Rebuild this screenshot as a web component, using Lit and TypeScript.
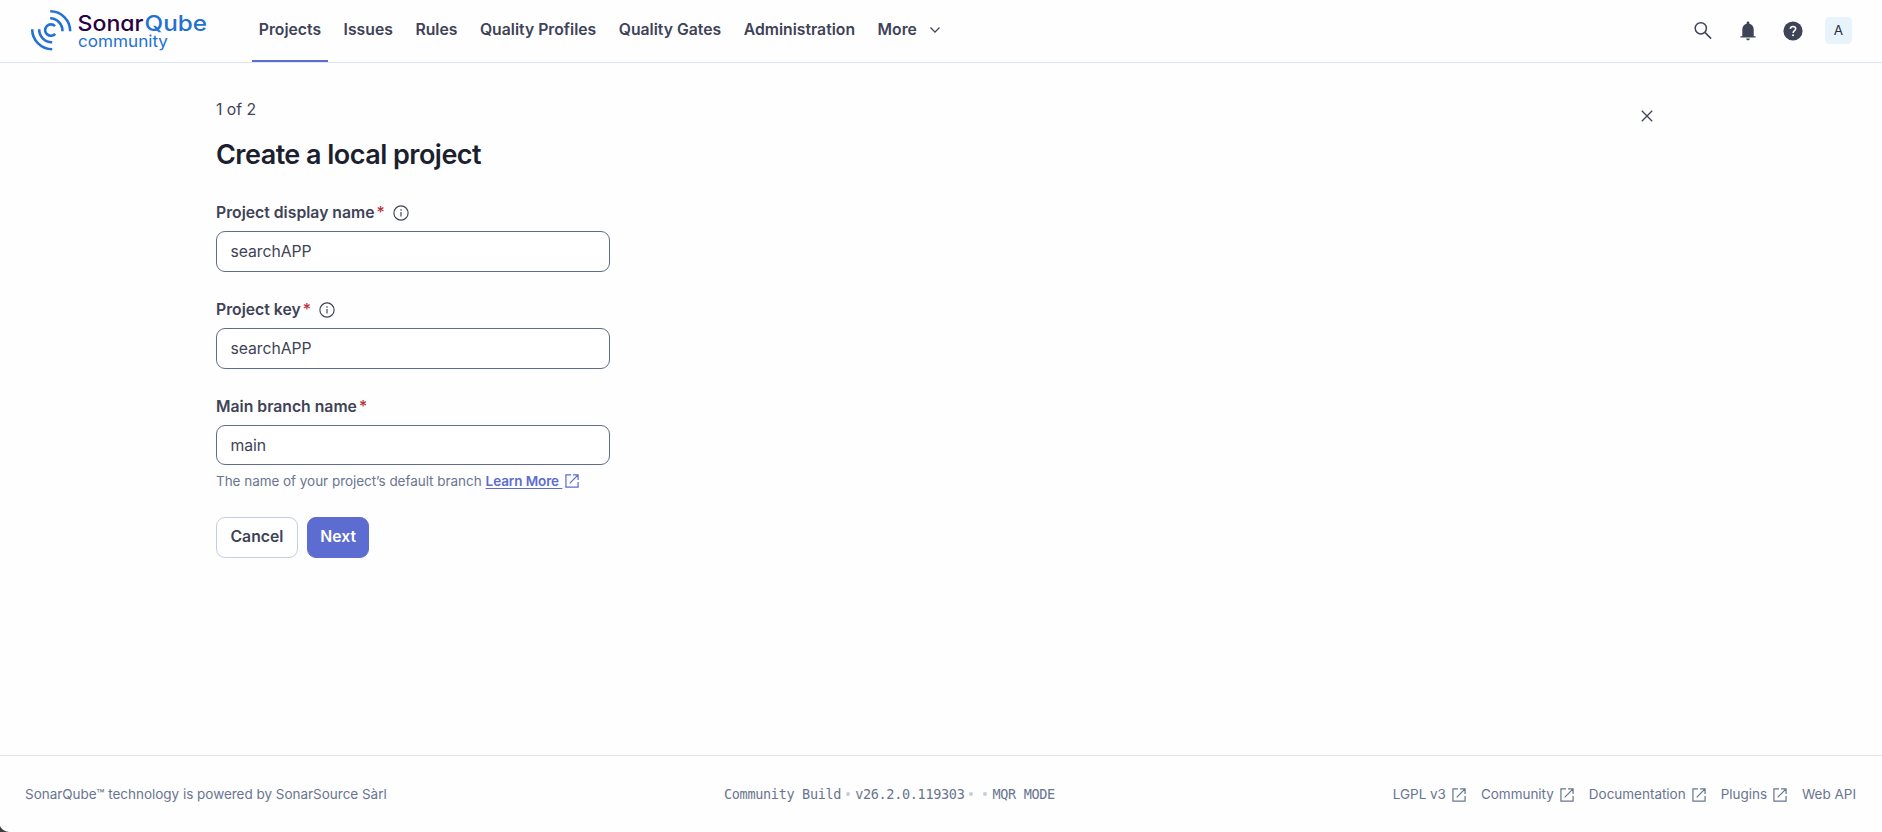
import { LitElement, html, css } from "lit";
import { customElement } from "lit/decorators.js";

const external = html`<svg class="ext" viewBox="0 0 15 15" fill="none" stroke="currentColor" stroke-width="1.3">
  <path d="M6.5 1H1v13h13V8.5M8.6 1H14v5.4M14 1 5 10" />
</svg>`;

const info = html`<svg class="info" viewBox="0 0 16 16" fill="none" stroke="currentColor" stroke-width="1.15">
  <circle cx="8" cy="8" r="7.1" /><path d="M8 7v4.4" /><circle cx="8" cy="5" r=".8" fill="currentColor" stroke="none" />
</svg>`;

@customElement("app-root")
export class AppRoot extends LitElement {
  static styles = css`
    :host { display: flex; flex-direction: column; height: 832px; overflow: hidden; position: relative;
      background: #fefefe; color: #3e4357; font: 400 15.75px/22.5px Inter, sans-serif; box-sizing: border-box; }
    * { box-sizing: border-box; }
    svg { display: block; flex: none; }
    header { display: flex; height: 63px; border-bottom: 1px solid #dde5f0; padding-left: 28px; padding-right: 30px; flex: none; }
    .logo { width: 182px; height: 56px; margin-right: 42px; }
    .sonar { font: 500 21.5px Inter, sans-serif; font-feature-settings: "cv11"; }
    .edition { font: 400 16.5px Inter, sans-serif; }
    nav { display: flex; gap: 9px; height: 62px; }
    .item { padding: 19px 6.75px 0; font-weight: 600; border-bottom: 2px solid transparent; display: flex; }
    .item.active { border-color: #5d6cd0; }
    .chev { width: 12px; height: 8px; margin: 7px 0 0 12px; }
    .tools { margin-left: auto; display: flex; height: 61px; align-items: center; gap: 27px; }
    .tools svg { width: 18px; height: 20px; }
    .tools .help { width: 20px; margin-left: -1px; margin-right: -5px; }
    .avatar { width: 27px; height: 27px; border-radius: 4.5px; background: #e9f3fb; font-size: 13.5px; line-height: 27px; text-align: center; color: #2a2f40; }
    main { flex: 1; padding: 36px 229px 0 216px; display: flex; justify-content: space-between; align-items: flex-start; }
    .step { height: 23px; line-height: 22px; }
    h1 { margin: 15px 0 0; font: 600 27px/36px Inter, sans-serif; letter-spacing: -.53px; color: #1b1f2e; }
    .field { margin-top: 27px; }
    h1 + .field { margin-top: 29px; }
    .label { display: flex; height: 22px; line-height: 22px; align-items: center; font-weight: 600; margin-bottom: 7px; }
    .req { color: #b93235; margin-left: 2px; font-weight: 500; }
    .info { width: 16px; height: 16px; margin-left: 8px; }
    .box { width: 394px; height: 41px; border: 1px solid #626c8a; border-radius: 9px; padding: 0 13.5px; line-height: 39px; letter-spacing: -.05px; background: #fff; }
    .box.short { height: 40px; }
    .hint { margin-top: 5px; display: flex; font-size: 13.5px; line-height: 22px; color: #6a7590; align-items: center; letter-spacing: -.04px; }
    .hint a { color: #5d6cd0; font-weight: 600; text-decoration: underline; margin: 0 3px 0 4px; white-space: pre; text-underline-offset: 2px; letter-spacing: -.1px; }
    .hint .ext { color: #5d6cd0; }
    .ext { width: 14px; height: 14px; }
    .actions { display: flex; gap: 9px; margin-top: 25px; }
    .btn { height: 41px; border-radius: 9px; line-height: 38px; font-weight: 600; padding: 0 13.5px; border: 1px solid #c5cde0; background: #fff; }
    .btn.primary { background: #5d6cd0; border-color: #5d6cd0; color: #fff; padding: 0 12.4px; }
    .close { width: 12px; height: 12px; margin-top: 11px; }
    footer { height: 77px; flex: none; border-top: 1px solid #e3e5e8; padding: 1px 26px 0 25px; display: grid; grid-template-columns: 699px 1fr auto; align-items: center; font-size: 13.5px; color: #69758f; letter-spacing: -.02px; }
    .build { display: flex; align-items: center; font: 400 13.5px/20px "DejaVu Sans Mono", monospace; letter-spacing: -.32px; padding-bottom: 2px; }
    .dot { width: 4px; height: 4px; border-radius: 50%; background: #c5cde0; margin: 0 5px; }
    .links { display: flex; gap: 15px; }
    .link { display: flex; align-items: center; gap: 6px; }
    .corner { position: absolute; left: 0; bottom: 0; width: 9px; height: 6px; }
  `;

  field(label: string, value: string, tip: boolean) {
    return html`<section class="field">
      <div class="label"><span>${label}</span><span class="req">*</span>${tip ? info : ""}</div>
      <div class="box ${tip ? "" : "short"}">${value}</div>
    </section>`;
  }

  render() {
    const nav = ["Projects", "Issues", "Rules", "Quality Profiles", "Quality Gates", "Administration"];
    return html`
      <header>
        <svg class="logo" viewBox="28 0 182 56">
          <g fill="none" stroke="#2271d3" stroke-width="2.6">
            <path d="M50.2 11.3A20 20 0 0 1 70.2 31.3M50.2 18.3A12.6 12.6 0 0 1 62.5 31.3" />
            <path d="M32.2 29.3A20 20 0 0 0 52.2 49.3M39.2 29.3A12.6 12.6 0 0 0 52.2 42.2" />
            <path d="M55 26.2A5.7 5.7 0 1 0 55.2 33.8" />
          </g>
          <text class="sonar" x="77.5" y="30.7" fill="#290042" textLength="66" lengthAdjust="spacingAndGlyphs">Sonar</text>
          <text class="sonar" x="144.5" y="30.7" fill="#2271d3" textLength="62.5" lengthAdjust="spacingAndGlyphs">Qube</text>
          <text class="edition" x="78" y="46.6" fill="#2271d3" textLength="90" lengthAdjust="spacingAndGlyphs">community</text>
        </svg>
        <nav>
          ${nav.map((n, i) => html`<div class="item ${i ? "" : "active"}">${n}</div>`)}
          <div class="item">More
            <svg class="chev" viewBox="0 0 12 8" fill="none" stroke="#3e4357" stroke-width="1.3"><path d="m1.5 1.5 4.5 4.6 4.5-4.6" /></svg>
          </div>
        </nav>
        <div class="tools">
          <svg viewBox="0 0 18 20" fill="none" stroke="#3e4357" stroke-width="1.5"><circle cx="6.8" cy="7.3" r="5.6" /><path d="m10.9 11.4 6.2 6.2" /></svg>
          <svg viewBox="0 0 18 20" fill="#3e4357"><path d="M1.4 15.2h1.9V8.4c0-3 1.7-5 4.3-5.7V2a1.4 1.4 0 0 1 2.8 0v.7c2.6.7 4.3 2.7 4.3 5.7v6.8h1.9v1.4H1.4zM7.2 17.6h3.6a1.8 1.8 0 0 1-3.6 0z" /></svg>
          <svg class="help" viewBox="0 0 20 20"><circle cx="10" cy="10" r="9.6" fill="#3e4357" /><path d="M7.3 7.9c.1-1.6 1.2-2.5 2.7-2.5s2.7.9 2.7 2.3c0 1.9-2.6 2.1-2.6 4.3" fill="none" stroke="#fff" stroke-width="1.5" /><circle cx="10.05" cy="14.3" r="1" fill="#fff" /></svg>
          <div class="avatar">A</div>
        </div>
      </header>
      <main>
        <div>
          <div class="step">1 of 2</div>
          <h1>Create a local project</h1>
          ${this.field("Project display name", "searchAPP", true)}
          ${this.field("Project key", "searchAPP", true)}
          ${this.field("Main branch name", "main", false)}
          <div class="hint"><span>The name of your project’s default branch</span><a>Learn More </a>${external}</div>
          <div class="actions"><div class="btn">Cancel</div><div class="btn primary">Next</div></div>
        </div>
        <svg class="close" viewBox="0 0 12 12" fill="none" stroke="#3e4357" stroke-width="1.3"><path d="m.8.8 10.4 10.4M11.2.8.8 11.2" /></svg>
      </main>
      <footer>
        <span>SonarQube™ technology is powered by SonarSource Sàrl</span>
        <div class="build">Community Build<i class="dot"></i>v26.2.0.119303<i class="dot"></i><i class="dot"></i>MQR MODE</div>
        <div class="links">
          ${["LGPL v3", "Community", "Documentation", "Plugins"].map((l) => html`<span class="link">${l}${external}</span>`)}
          <span class="link">Web API</span>
        </div>
      </footer>
      <svg class="corner" viewBox="0 0 9 6"><path d="M0 0Q2 5 9 6H0Z" fill="#3d3d3d" /></svg>
    `;
  }
}
